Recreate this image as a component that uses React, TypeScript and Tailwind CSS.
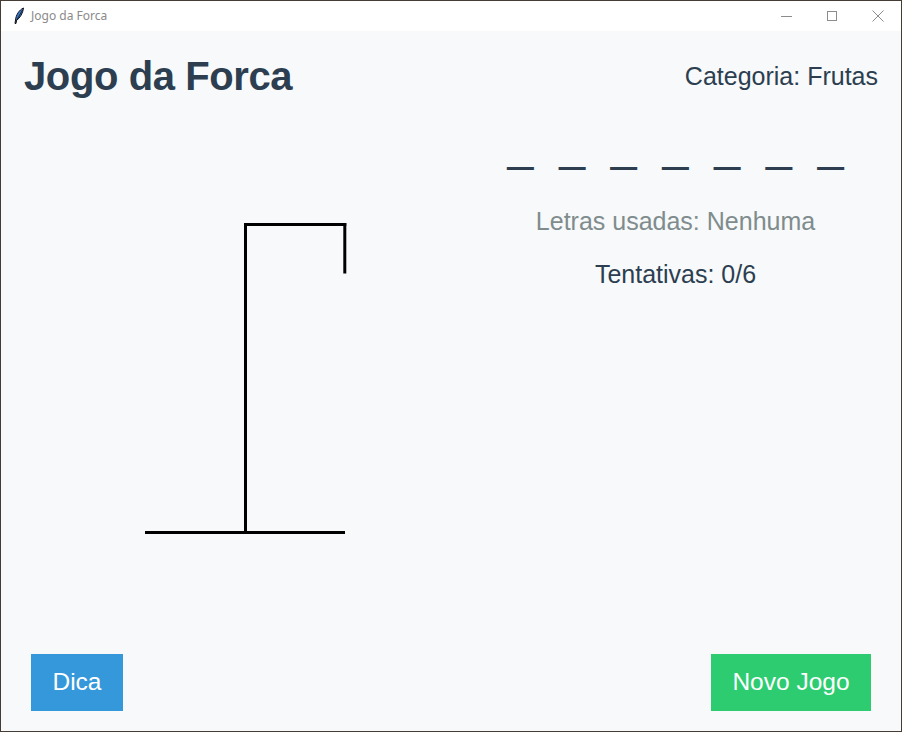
import React from "react";

const font = { fontFamily: '"Liberation Sans", Arial, sans-serif' };

function Feather() {
  return (
    <svg width="12" height="18" viewBox="0 0 12 18" className="block">
      <path d="M10.5 1 C6 3 3 8 2.5 13 L2 16.5 L3 16.5 L3.5 13.5 C7 11 10 6 10.5 1 Z" fill="#3a7bd5" stroke="#111" strokeWidth="1" />
      <path d="M9.5 3 L3.2 14" stroke="#111" strokeWidth="0.8" />
    </svg>
  );
}

export default function App() {
  return (
    <div className="w-[902px] h-[732px] border border-[#453c36] flex flex-col bg-white" style={font}>
      {/* title bar */}
      <div className="h-[30px] flex items-center bg-white shrink-0">
        <div className="ml-[11px] w-[14px] flex justify-center">
          <Feather />
        </div>
        <span className="ml-[5px] text-[12px] text-[#8a8a8a]" style={{ fontFamily: '"Noto Sans", "Liberation Sans", sans-serif' }}>
          Jogo da Forca
        </span>
        <div className="ml-auto flex items-center h-full">
          <div className="w-[46px] h-full flex items-center justify-center">
            <div className="w-[11px] h-px bg-[#8c8c8c]" />
          </div>
          <div className="w-[46px] h-full flex items-center justify-center">
            <div className="w-[10px] h-[10px] border border-[#8c8c8c]" />
          </div>
          <div className="w-[46px] h-full flex items-center justify-center">
            <svg width="12" height="12" viewBox="0 0 12 12">
              <path d="M0.5 0.5 L11.5 11.5 M11.5 0.5 L0.5 11.5" stroke="#8c8c8c" strokeWidth="1" />
            </svg>
          </div>
        </div>
      </div>

      {/* content */}
      <div className="flex-1 flex flex-col bg-[#f7f9fa]">
        <div className="pt-[25px] pl-[23px] pr-[23px] flex items-center justify-between h-[65px]">
          <h1 className="text-[40px] leading-[40px] font-bold text-[#2c3e50] tracking-[-0.4px]">Jogo da Forca</h1>
          <span className="text-[25px] leading-[40px] text-[#2c3e50]">Categoria: Frutas</span>
        </div>

        <div className="flex-1 flex">
          <div className="w-[449px] shrink-0">
            <svg width="449" height="450" className="block">
              <line x1="144" y1="436.5" x2="344" y2="436.5" stroke="#000" strokeWidth="3" />
              <line x1="244.5" y1="127" x2="244.5" y2="436.5" stroke="#000" strokeWidth="3" />
              <line x1="243" y1="128.5" x2="345.3" y2="128.5" stroke="#000" strokeWidth="3" />
              <line x1="343.8" y1="127" x2="343.8" y2="177.5" stroke="#000" strokeWidth="3" />
            </svg>
          </div>
          <div className="flex-1 flex flex-col items-center pt-[26px]">
            <div className="text-[46.5px] leading-[47px] text-[#2c3e50] whitespace-pre">_  _  _  _  _  _  _</div>
            <div className="mt-[37px] text-[25px] leading-[30px] text-[#7f8c8d]">Letras usadas: Nenhuma</div>
            <div className="mt-[23px] text-[25px] leading-[30px] text-[#2c3e50]">Tentativas: 0/6</div>
          </div>
        </div>

        <div className="flex justify-between pl-[30px] pr-[30px] pb-[20px]">
          <button className="w-[92px] h-[57px] bg-[#3498db] text-white text-[24.5px] flex items-center justify-center">Dica</button>
          <button className="w-[160px] h-[57px] bg-[#2ecc71] text-white text-[24.5px] flex items-center justify-center">Novo Jogo</button>
        </div>
      </div>
    </div>
  );
}
